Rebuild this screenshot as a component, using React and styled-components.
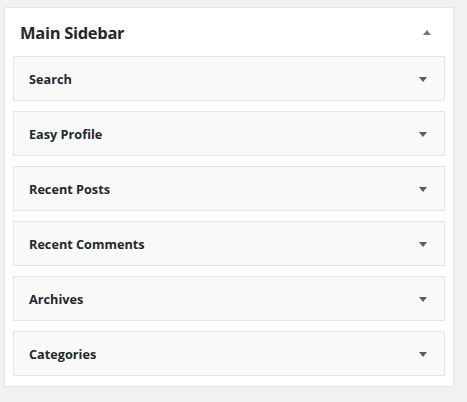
import React from "react";
import styled, { createGlobalStyle } from "styled-components";

const Global = createGlobalStyle`
  html, body { margin: 0; padding: 0; background: #f1f1f1; }
  body { font-family: "Open Sans", "Noto Sans", sans-serif; }
`;

const Page = styled.div`
  padding: 7px 0 0 4px;
`;

const Panel = styled.section`
  width: 450px;
  box-sizing: border-box;
  background: #fff;
  border: 1px solid #e5e5e5;
  box-shadow: 0 1px 1px rgba(0, 0, 0, 0.04);
  padding: 0 8px 10px 8px;
`;

const Header = styled.div`
  height: 48px;
  display: flex;
  align-items: center;
  justify-content: space-between;
  padding: 1px 0 0 7px;
  box-sizing: border-box;
`;

const Title = styled.h2`
  margin: 0;
  font-size: 16.5px;
  font-weight: 700;
  color: #23282d;
  letter-spacing: -0.3px;
`;

const Arrow = styled.span`
  width: 0;
  height: 0;
  border-left: 4px solid transparent;
  border-right: 4px solid transparent;
  ${(p) =>
    p.$up
      ? "border-bottom: 5px solid #72777c;"
      : "border-top: 5px solid #555d66;"}
  margin-right: ${(p) => p.$mr}px;
`;

const List = styled.div`
  display: flex;
  flex-direction: column;
  gap: 10px;
`;

const Widget = styled.div`
  height: 45px;
  box-sizing: border-box;
  background: #f9f9f9;
  border: 1px solid #e5e5e5;
  display: flex;
  align-items: center;
  justify-content: space-between;
  padding: 1px 0 0 15px;
`;

const WidgetTitle = styled.h3`
  margin: 0;
  font-size: 12.7px;
  font-weight: 700;
  color: #23282d;
`;

const widgets = [
  "Search",
  "Easy Profile",
  "Recent Posts",
  "Recent Comments",
  "Archives",
  "Categories",
];

export default function App() {
  return (
    <>
      <Global />
      <Page>
        <Panel>
          <Header>
            <Title>Main Sidebar</Title>
            <Arrow $up $mr={14} />
          </Header>
          <List>
            {widgets.map((w) => (
              <Widget key={w}>
                <WidgetTitle>{w}</WidgetTitle>
                <Arrow $mr={17} />
              </Widget>
            ))}
          </List>
        </Panel>
      </Page>
    </>
  );
}
